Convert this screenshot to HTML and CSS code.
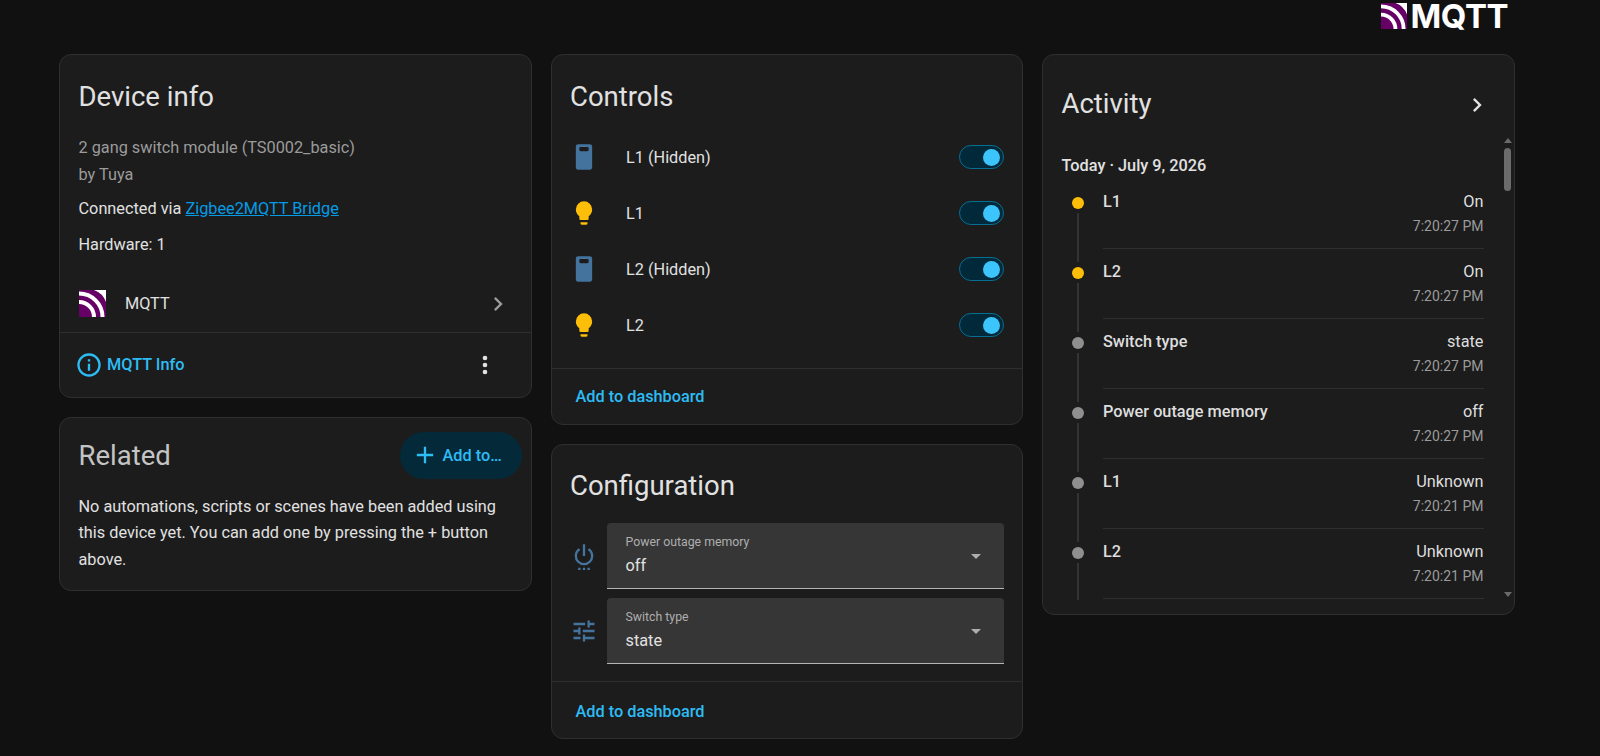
FILE: index.html
```html
<!DOCTYPE html>
<html lang="en">
<head>
    <meta charset="UTF-8">
    <meta name="viewport" content="width=device-width, initial-scale=1.0">
    <title>2 gang switch module</title>

    <link rel="stylesheet" href="styles.css">
</head>
<body>
    <header class="logo-bar">
        <div class="logo">
            <svg class="mqtt-icon logo-icon" viewBox="0 0 27 27">
                <rect width="27" height="27" fill="#660066"/>
                <path d="M0 3.5A23.5 23.5 0 0 1 23.5 27" class="arc"/>
                <path d="M0 12A15 15 0 0 1 15 27" class="arc"/>
                <path d="M15 0H27V12A20 20 0 0 0 15 0Z" fill="#fff"/>
            </svg>
            <span class="logo-text">MQTT</span>
        </div>
    </header>

    <main class="columns">
        <div class="column">
            <section class="card">
                <h1 class="card-title">Device info</h1>
                <div class="device-text">
                    <p class="muted">2 gang switch module (TS0002_basic)</p>
                    <p class="muted">by Tuya</p>
                    <p class="connected">Connected via <a href="#">Zigbee2MQTT Bridge</a></p>
                    <p class="hardware">Hardware: 1</p>
                </div>
                <div class="integration">
                    <svg class="mqtt-icon" viewBox="0 0 27 27">
                        <rect width="27" height="27" fill="#660066"/>
                        <path d="M0 3.5A23.5 23.5 0 0 1 23.5 27" class="arc"/>
                        <path d="M0 12A15 15 0 0 1 15 27" class="arc"/>
                        <path d="M15 0H27V12A20 20 0 0 0 15 0Z" fill="#fff"/>
                    </svg>
                    <span class="integration-name">MQTT</span>
                    <svg class="chevron" viewBox="0 0 24 24"><path d="M8.59 16.58 13.17 12 8.59 7.41 10 6l6 6-6 6z"/></svg>
                </div>
                <div class="card-actions device-actions">
                    <a class="action-link info-link" href="#">
                        <svg viewBox="0 0 24 24"><path d="M11 9h2V7h-2m1 13c-4.41 0-8-3.59-8-8s3.59-8 8-8 8 3.59 8 8-3.59 8-8 8m0-18A10 10 0 0 0 2 12a10 10 0 0 0 10 10 10 10 0 0 0 10-10A10 10 0 0 0 12 2m-1 15h2v-6h-2z"/></svg>
                        MQTT Info
                    </a>
                    <svg class="dots" viewBox="0 0 24 24"><path d="M12 16a2 2 0 0 1 2 2 2 2 0 0 1-2 2 2 2 0 0 1-2-2 2 2 0 0 1 2-2m0-6a2 2 0 0 1 2 2 2 2 0 0 1-2 2 2 2 0 0 1-2-2 2 2 0 0 1 2-2m0-6a2 2 0 0 1 2 2 2 2 0 0 1-2 2 2 2 0 0 1-2-2 2 2 0 0 1 2-2"/></svg>
                </div>
            </section>

            <section class="card related">
                <div class="related-head">
                    <h2 class="card-title related-title">Related</h2>
                    <button class="add-btn">
                        <svg viewBox="0 0 24 24"><path d="M19 13h-6v6h-2v-6H5v-2h6V5h2v6h6z"/></svg>
                        Add to…
                    </button>
                </div>
                <p class="related-text">No automations, scripts or scenes have been added using this device yet. You can add one by pressing the + button above.</p>
            </section>
        </div>

        <div class="column">
            <section class="card">
                <h2 class="card-title">Controls</h2>
                <ul class="controls">
                    <li class="control">
                        <svg class="entity-icon blue" viewBox="0 0 24 24"><path d="M7 1h10a2 2 0 0 1 2 2v18a2 2 0 0 1-2 2H7a2 2 0 0 1-2-2V3a2 2 0 0 1 2-2m2 2.500a1 1 0 0 0-1 1v1.500a1 1 0 0 0 1 1h6a1 1 0 0 0 1-1V4.500a1 1 0 0 0-1-1z" fill-rule="evenodd"/></svg>
                        <span>L1 (Hidden)</span>
                        <div class="toggle"></div>
                    </li>
                    <li class="control">
                        <svg class="entity-icon yellow" viewBox="0 0 24 24"><path d="M12 2a7 7 0 0 0-7 7c0 2.380 1.190 4.470 3 5.740V17a1 1 0 0 0 1 1h6a1 1 0 0 0 1-1v-2.260c1.810-1.270 3-3.360 3-5.740a7 7 0 0 0-7-7M9 21a1 1 0 0 0 1 1h4a1 1 0 0 0 1-1v-1H9z"/></svg>
                        <span>L1</span>
                        <div class="toggle"></div>
                    </li>
                    <li class="control">
                        <svg class="entity-icon blue" viewBox="0 0 24 24"><path d="M7 1h10a2 2 0 0 1 2 2v18a2 2 0 0 1-2 2H7a2 2 0 0 1-2-2V3a2 2 0 0 1 2-2m2 2.500a1 1 0 0 0-1 1v1.500a1 1 0 0 0 1 1h6a1 1 0 0 0 1-1V4.500a1 1 0 0 0-1-1z" fill-rule="evenodd"/></svg>
                        <span>L2 (Hidden)</span>
                        <div class="toggle"></div>
                    </li>
                    <li class="control">
                        <svg class="entity-icon yellow" viewBox="0 0 24 24"><path d="M12 2a7 7 0 0 0-7 7c0 2.380 1.190 4.470 3 5.740V17a1 1 0 0 0 1 1h6a1 1 0 0 0 1-1v-2.260c1.810-1.270 3-3.360 3-5.740a7 7 0 0 0-7-7M9 21a1 1 0 0 0 1 1h4a1 1 0 0 0 1-1v-1H9z"/></svg>
                        <span>L2</span>
                        <div class="toggle"></div>
                    </li>
                </ul>
                <div class="card-actions">
                    <a class="action-link" href="#">Add to dashboard</a>
                </div>
            </section>

            <section class="card">
                <h2 class="card-title config-title">Configuration</h2>
                <div class="config-list">
                    <div class="config-row">
                        <svg class="entity-icon blue" viewBox="0 0 24 24"><path d="M15 24h2v-2h-2m1.560-16.560-1.450 1.450C16.840 7.940 18 9.830 18 12a6 6 0 0 1-6 6 6 6 0 0 1-6-6c0-2.170 1.160-4.060 2.880-5.120L7.440 5.440C5.360 6.880 4 9.280 4 12a8 8 0 0 0 8 8 8 8 0 0 0 8-8c0-2.720-1.360-5.120-3.440-6.560M13 2h-2v10h2m-2 12h2v-2h-2m-4 2h2v-2H7z"/></svg>
                        <div class="select">
                            <label>Power outage memory</label>
                            <div class="select-value">off</div>
                            <span class="select-arrow"></span>
                        </div>
                    </div>
                    <div class="config-row">
                        <svg class="entity-icon blue" viewBox="0 0 24 24"><path d="M3 17v2h6v-2H3M3 5v2h10V5H3m10 16v-2h8v-2h-8v-2h-2v6h2M7 9v2H3v2h4v2h2V9H7m14 4v-2H11v2h10m-6-4h2V7h4V5h-4V3h-2v6z"/></svg>
                        <div class="select">
                            <label>Switch type</label>
                            <div class="select-value">state</div>
                            <span class="select-arrow"></span>
                        </div>
                    </div>
                </div>
                <div class="card-actions config-actions">
                    <a class="action-link" href="#">Add to dashboard</a>
                </div>
            </section>
        </div>

        <div class="column">
            <section class="card activity">
                <div class="activity-head">
                    <h2 class="card-title activity-title">Activity</h2>
                    <svg class="activity-chevron" viewBox="0 0 24 24"><path d="M8.590 16.580 13.170 12 8.590 7.410 10 6l6 6-6 6z"/></svg>
                </div>
                <div class="logbook">
                    <div class="log-date">Today · July 9, 2026</div>
                    <div class="log-entry">
                        <div class="log-dot on"></div>
                        <div class="log-body">
                            <div class="log-line"><span>L1</span><span class="log-state">On</span></div>
                            <div class="log-time">7:20:27 PM</div>
                        </div>
                    </div>
                    <div class="log-entry">
                        <div class="log-dot on"></div>
                        <div class="log-body">
                            <div class="log-line"><span>L2</span><span class="log-state">On</span></div>
                            <div class="log-time">7:20:27 PM</div>
                        </div>
                    </div>
                    <div class="log-entry">
                        <div class="log-dot"></div>
                        <div class="log-body">
                            <div class="log-line"><span>Switch type</span><span class="log-state">state</span></div>
                            <div class="log-time">7:20:27 PM</div>
                        </div>
                    </div>
                    <div class="log-entry">
                        <div class="log-dot"></div>
                        <div class="log-body">
                            <div class="log-line"><span>Power outage memory</span><span class="log-state">off</span></div>
                            <div class="log-time">7:20:27 PM</div>
                        </div>
                    </div>
                    <div class="log-entry">
                        <div class="log-dot"></div>
                        <div class="log-body">
                            <div class="log-line"><span>L1</span><span class="log-state">Unknown</span></div>
                            <div class="log-time">7:20:21 PM</div>
                        </div>
                    </div>
                    <div class="log-entry">
                        <div class="log-dot"></div>
                        <div class="log-body">
                            <div class="log-line"><span>L2</span><span class="log-state">Unknown</span></div>
                            <div class="log-time">7:20:21 PM</div>
                        </div>
                    </div>
                </div>
                <div class="fake-scrollbar">
                    <span class="scroll-up"></span>
                    <span class="scroll-thumb"></span>
                    <span class="scroll-down"></span>
                </div>
            </section>
        </div>
    </main>
</body>
</html>
```

FILE: styles.css
```css
:root{
    --fundo: #111111;
    --card: #1c1c1c;
    --borda: #2f2f2f;
    --linha: #2f2f2f;
    --texto: #e1e1e1;
    --texto-2: #9b9b9b;
    --azul: #2ebcf5;
    --azul-icone: #44739e;
    --amarelo: #fdbe09;
}

*{
    box-sizing: border-box;
}

html, body{
    height: 100%;
}

body{
    margin: 0;
    background-color: var(--fundo);
    color: var(--texto);
    font-family: Roboto, sans-serif;
    font-size: 16.3px;
    overflow: hidden;
}

h1, h2, p, ul{
    margin: 0;
    padding: 0;
}

.logo-bar{
    height: 54px;
    padding-right: 92px;
    display: flex;
    justify-content: flex-end;
    align-items: flex-start;
}

.logo{
    display: flex;
    align-items: flex-start;
    gap: 4px;
}

.logo-icon{
    width: 26px;
    height: 26px;
    margin-top: 3px;
}

.logo-text{
    color: #fff;
    font-family: Inter, sans-serif;
    font-weight: 700;
    font-size: 33px;
    line-height: 32px;
    letter-spacing: -0.5px;
}

.mqtt-icon{
    display: block;
    flex-shrink: 0;
}

.arc{
    fill: none;
    stroke: #fff;
    stroke-width: 4;
}

.columns{
    display: grid;
    grid-template-columns: repeat(3, 472.5px);
    column-gap: 19px;
    padding-left: 59px;
    align-items: start;
}

.column{
    display: flex;
    flex-direction: column;
    gap: 19px;
}

.card{
    background-color: var(--card);
    border: 1px solid var(--borda);
    border-radius: 12px;
}

.card-title{
    font-size: 27.5px;
    font-weight: 400;
    line-height: 40px;
    padding: 22px 18.5px 0;
    color: var(--texto);
}

/* device info */
.device-text{
    padding: 18px 18.5px 0;
    line-height: 24px;
}

.muted{
    color: var(--texto-2);
    line-height: 26.5px;
}

.connected{
    margin-top: 8.5px;
    color: var(--texto);
}

.connected a{
    color: #039be5;
}

.hardware{
    margin-top: 12px;
}

.integration{
    display: flex;
    align-items: center;
    height: 56px;
    padding: 0 18.5px;
    margin-top: 19px;
}

.integration .mqtt-icon{
    width: 27px;
    height: 27px;
}

.integration-name{
    margin-left: 19.5px;
    flex: 1;
}

.chevron{
    width: 28px;
    height: 28px;
    fill: #9b9b9b;
}

.card-actions{
    border-top: 1px solid var(--linha);
    height: 56px;
    padding: 0 24px;
    display: flex;
    align-items: center;
    justify-content: space-between;
}

.device-actions{
    height: 65px;
    padding: 0 32px 0 15px;
}

.action-link{
    color: var(--azul);
    font-size: 16.3px;
    font-weight: 500;
    text-decoration: none;
    display: flex;
    align-items: center;
}

.info-link{
    gap: 4px;
}

.info-link svg{
    width: 28px;
    height: 28px;
    fill: var(--azul);
}

.dots{
    width: 28px;
    height: 28px;
    fill: #e1e1e1;
}

/* related */
.related{
    height: 174px;
    padding-bottom: 16px;
}

.related-head{
    display: flex;
    justify-content: space-between;
    align-items: flex-start;
    padding-right: 9px;
}

.related-title{
    color: #c4c4c4;
    padding-top: 18px;
}

.add-btn{
    margin-top: 14px;
    height: 47px;
    width: 122px;
    border: none;
    border-radius: 24px;
    background-color: #042a3a;
    color: var(--azul);
    font-family: Roboto, sans-serif;
    font-size: 16.3px;
    font-weight: 500;
    display: flex;
    align-items: center;
    gap: 4px;
    padding: 0 0 0 11px;
}

.add-btn svg{
    width: 28px;
    height: 28px;
    fill: var(--azul);
}

.related-text{
    padding: 15px 18.5px 0;
    line-height: 26.5px;
    color: var(--texto);
}

/* controls */
.controls{
    list-style: none;
    padding: 12px 18.5px 0;
    height: 251px;
}

.control{
    display: flex;
    align-items: center;
    height: 56px;
}

.control span{
    flex: 1;
    margin-left: 28px;
}

.entity-icon{
    width: 28px;
    height: 28px;
    flex-shrink: 0;
}

.blue{
    fill: var(--azul-icone);
}

.yellow{
    fill: var(--amarelo);
}

.toggle{
    width: 45px;
    height: 24px;
    border-radius: 12px;
    background-color: #01293a;
    border: 1px solid #076f92;
    position: relative;
}

.toggle::after{
    content: "";
    position: absolute;
    top: 2.5px;
    right: 2.5px;
    width: 17px;
    height: 17px;
    border-radius: 50%;
    background-color: #3cc5fc;
}

/* configuration */
.config-title{
    padding-top: 21px;
}

.config-list{
    padding: 17px 18.5px 0;
    display: flex;
    flex-direction: column;
    gap: 9px;
}

.config-row{
    display: flex;
    align-items: center;
}

.select{
    position: relative;
    margin-left: 9px;
    flex: 1;
    height: 66px;
    padding: 12px 18.5px 0;
    background-color: #363636;
    border-radius: 4px 4px 0 0;
    border-bottom: 1px solid #b4b4b4;
}

.select label{
    display: block;
    font-size: 12.3px;
    line-height: 14px;
    color: #aeaeae;
}

.select-value{
    margin-top: 6px;
    line-height: 22px;
    color: var(--texto);
}

.select-arrow{
    position: absolute;
    right: 23px;
    top: 31px;
    width: 0;
    height: 0;
    border-left: 5px solid transparent;
    border-right: 5px solid transparent;
    border-top: 5px solid #aeaeae;
}

.config-actions{
    margin-top: 17px;
    height: 57px;
    padding-top: 2px;
}

/* activity */
.activity{
    position: relative;
    height: 561px;
    overflow: hidden;
}

.activity-head{
    display: flex;
    justify-content: space-between;
    align-items: center;
    padding: 29px 23px 0 0;
}

.activity-title{
    padding-top: 0;
}

.activity-chevron{
    width: 28px;
    height: 28px;
    margin-top: 2px;
    fill: #e1e1e1;
}

.logbook{
    height: 476px;
    overflow: hidden;
    padding: 32px 30px 0 18.5px;
}

.log-date{
    font-weight: 500;
    line-height: 20px;
    color: var(--texto);
    margin-bottom: 3px;
}

.log-entry{
    display: flex;
    height: 70px;
    position: relative;
}

.log-dot{
    width: 12px;
    height: 12px;
    margin: 18px 0 0 10.5px;
    border-radius: 50%;
    background-color: #8f8f8f;
    flex-shrink: 0;
}

.log-dot.on{
    background-color: var(--amarelo);
}

.log-dot::after{
    content: "";
    position: absolute;
    left: 15.5px;
    top: 34px;
    width: 2px;
    height: 49px;
    background-color: #333333;
}

.log-body{
    flex: 1;
    margin-left: 19px;
    padding-top: 12.5px;
    border-bottom: 1px solid var(--linha);
    height: 70px;
}

.log-line{
    display: flex;
    justify-content: space-between;
    font-weight: 500;
    line-height: 20px;
    color: #dedede;
}

.log-state{
    font-weight: 400;
}

.log-time{
    margin-top: 4px;
    text-align: right;
    font-size: 14px;
    line-height: 20px;
    color: var(--texto-2);
}

.fake-scrollbar{
    position: absolute;
    top: 83px;
    right: 1px;
    bottom: 17px;
    width: 10px;
}

.scroll-up, .scroll-down{
    position: absolute;
    left: 1px;
    width: 0;
    height: 0;
    border-left: 4px solid transparent;
    border-right: 4px solid transparent;
}

.scroll-up{
    top: 0;
    border-bottom: 5px solid #6a6a6a;
}

.scroll-down{
    bottom: 0;
    border-top: 5px solid #6a6a6a;
}

.scroll-thumb{
    position: absolute;
    top: 10px;
    left: 1px;
    width: 7px;
    height: 43px;
    border-radius: 4px;
    background-color: #6b6b6b;
}
```
